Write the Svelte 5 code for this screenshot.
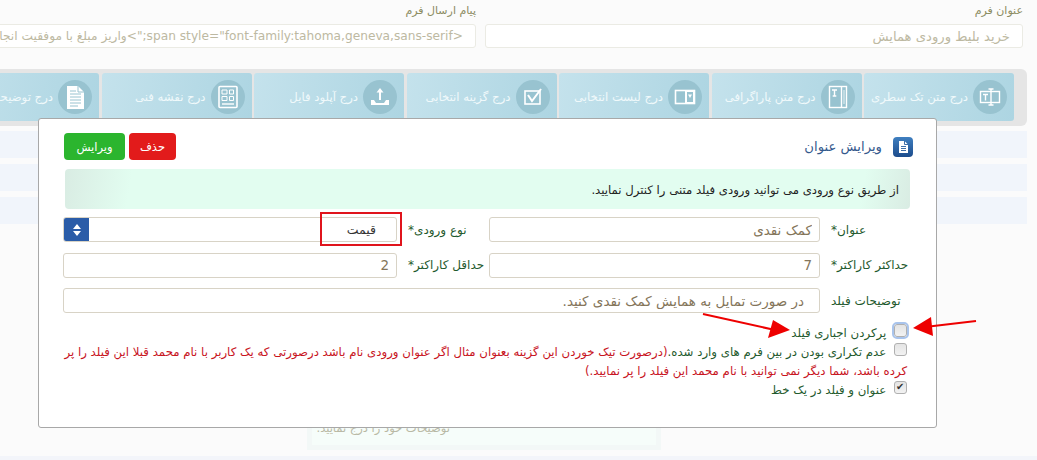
<script>
  const sendMessage = '<span style="font-family:tahoma,geneva,sans-serif;">واریز مبلغ با موفقیت انجام شد';

  const tabs = [
    { id: "line", label: "درج متن تک سطری" },
    { id: "para", label: "درج متن پاراگرافی" },
    { id: "list", label: "درج لیست انتخابی" },
    { id: "check", label: "درج گزینه انتخابی" },
    { id: "upload", label: "درج آپلود فایل" },
    { id: "plan", label: "درج نقشه فنی" },
    { id: "doc", label: "درج توضیحات" },
  ];
</script>

<div class="page" dir="rtl">
  <div class="top-fields">
    <div class="field">
      <span class="top-label">عنوان فرم</span>
      <input class="top-input title-input" value="خرید بلیط ورودی همایش" />
    </div>
    <div class="field">
      <span class="top-label">پیام ارسال فرم</span>
      <input class="top-input" value={sendMessage} />
    </div>
  </div>

  <div class="toolbar">
    {#each tabs as tab}
      <div class="tab">
        <span class="tab-icon">
          <svg viewBox="0 0 34 34" width="34" height="34" fill="none" stroke="#fff" stroke-width="1.4">
            {#if tab.id === "line"}
              <rect x="7.5" y="11.5" width="19" height="11" />
              <path d="M18 9v16M15.5 9h5M15.5 25h5" />
              <path d="M10 14.5h5M12.5 14.5v6" />
            {:else if tab.id === "para"}
              <rect x="8.5" y="6.5" width="17" height="21" />
              <path d="M20.5 6v22" />
              <path d="M11 10h5M13.5 10v6M11.7 16h3.6" />
              <path d="M23 10v14" stroke-width="0.8" />
            {:else if tab.id === "list"}
              <rect x="7.5" y="10.5" width="19" height="13" stroke-width="1.6" />
              <rect x="17" y="10" width="10" height="14" fill="#fff" stroke="none" />
              <rect x="19" y="12" width="6" height="10" fill="#98c3d0" stroke="none" />
              <path d="M20 14.5h4l-2 3.5z" fill="#fff" stroke="none" />
            {:else if tab.id === "check"}
              <rect x="9" y="11" width="15" height="13" stroke-width="1.6" />
              <path d="M12 15l4 6 9-12" stroke-width="2" />
            {:else if tab.id === "upload"}
              <path d="M17 20V10" stroke-width="2" />
              <path d="M13.5 12.5L17 8l3.5 4.5z" fill="#fff" stroke="none" />
              <path d="M8 20h3l2 3h8l2-3h3v5H8z" fill="#fff" stroke="none" />
            {:else if tab.id === "plan"}
              <rect x="8" y="6.5" width="18" height="21" rx="1" stroke-width="1.6" />
              <path d="M11 10h5v4h-5zM18.5 10h4v4h-4zM11 16.5h5v4h-5zM18.5 16.5h4v4h-4z" stroke-width="1" />
              <path d="M11 24h12" stroke-width="1.4" />
            {:else}
              <path d="M9 6h11l6 6v17H9z" fill="#fff" stroke="none" />
              <path d="M20 6v6h6" stroke="#98c3d0" stroke-width="1" />
              <path d="M12 11h6M12 14h11M12 17h11M12 20h11M12 23h11M12 26h8" stroke="#98c3d0" stroke-width="1" />
            {/if}
          </svg>
        </span>
        <span class="tab-text">{tab.label}</span>
      </div>
    {/each}
  </div>

  <div class="ghost-row"></div>
  <div class="ghost-row"></div>
  <div class="ghost-row"></div>

  <div class="ghost-card">
    <div class="ghost-card-inner">توضیحات خود را درج نمایید.</div>
  </div>
  <div class="ghost-band"></div>

  <div class="modal">
    <div class="modal-head">
      <div class="modal-title">
        <span class="title-icon">
          <svg viewBox="0 0 20 20" width="20" height="20">
            <path d="M6 4h5.5L15 7.5V16H6z" fill="#fff" />
            <path d="M11.5 4v3.5H15M8 9.5h5M8 11.500h5M8 13.500h5" fill="none" stroke="#2a5f9e" stroke-width="0.9" />
          </svg>
        </span>
        <span>ویرایش عنوان</span>
      </div>
      <div class="modal-actions">
        <button class="btn btn-red">حذف</button>
        <button class="btn btn-green">ویرایش</button>
      </div>
    </div>

    <div class="alert">از طریق نوع ورودی می توانید ورودی فیلد متنی را کنترل نمایید.</div>

    <div class="form-grid">
      <span class="form-label">عنوان*</span>
      <input class="form-input" value="کمک نقدی" />
      <span class="form-label">نوع ورودی*</span>
      <div class="form-select">
        <span class="select-value">قیمت</span>
        <span class="select-arrows">
          <svg viewBox="0 0 10 14" width="10" height="14" fill="#fff">
            <path d="M5 1l4 5H1zM5 13L1 8h8z" />
          </svg>
        </span>
      </div>

      <span class="form-label">حداکثر کاراکتر*</span>
      <input class="form-input" value="7" />
      <span class="form-label">حداقل کاراکتر*</span>
      <input class="form-input" value="2" />

      <span class="form-label">توضیحات فیلد</span>
      <input class="form-input wide" value="در صورت تمایل به همایش کمک نقدی کنید." />
    </div>

    <div class="options">
      <label class="option">
        <input type="checkbox" class="focused" />
        <span class="green">پرکردن اجباری فیلد</span>
      </label>
      <label class="option">
        <input type="checkbox" />
        <span class="green">عدم تکراری بودن در بین فرم های وارد شده.</span><span class="red">(درصورت تیک خوردن این گزینه بعنوان مثال اگر عنوان ورودی نام باشد درصورتی که یک کاربر با نام محمد قبلا این فیلد را پر کرده باشد، شما دیگر نمی توانید با نام محمد این فیلد را پر نمایید.)</span>
      </label>
      <label class="option">
        <input type="checkbox" checked />
        <span class="green">عنوان و فیلد در یک خط</span>
      </label>
    </div>
  </div>

  <div class="callout-box"></div>

  <svg class="callout-arrows" viewBox="0 0 300 40" width="300" height="40">
    <path d="M13 9L85 25" stroke="#ee0000" stroke-width="2" />
    <path d="M100 25L83 15L78 33z" fill="#ee0000" />
    <path d="M286 16L235 22" stroke="#ee0000" stroke-width="2" />
    <path d="M223 23L241 12L243 31z" fill="#ee0000" />
  </svg>
</div>

<style>
  :global(body) {
    margin: 0;
    overflow: hidden;
    background: #fbfbfb;
  }

  .page {
    position: relative;
    width: 1037px;
    height: 460px;
    overflow: hidden;
    padding-top: 2px;
    box-sizing: border-box;
    font-family: "DejaVu Sans", sans-serif;
  }

  .top-fields {
    display: flex;
    gap: 9px;
    padding-right: 14px;
  }

  .field {
    display: flex;
    flex: 0 0 538px;
    flex-direction: column;
    gap: 4px;
  }

  .top-label {
    font-size: 11px;
    line-height: 18px;
    color: #8c8c62;
  }

  .top-input {
    box-sizing: border-box;
    width: 538px;
    height: 24px;
    padding: 0 12px;
    border: 1px solid #ebebe4;
    border-radius: 3px;
    background: #fff;
    color: #bdb9a2;
    font: 12.2px "DejaVu Sans", sans-serif;
  }

  .title-input {
    font-size: 13.2px;
  }

  .toolbar {
    display: flex;
    gap: 2.5px;
    width: 1027px;
    height: 57px;
    box-sizing: border-box;
    margin: 21px 10px 0 0;
    padding: 4px 13px 0 0;
    border-radius: 0 6px 6px 0;
    background: #e5e5e5;
  }

  .tab {
    display: flex;
    flex: 0 0 150px;
    align-items: center;
    gap: 5px;
    box-sizing: border-box;
    min-width: 0;
    height: 48px;
    padding: 0 7px 0 0;
    border-radius: 3px;
    background: linear-gradient(100deg, #c4e2ec 0%, #add5e2 100%);
    white-space: nowrap;
  }

  .tab-icon {
    display: flex;
    flex: 0 0 34px;
    height: 34px;
    border-radius: 50%;
    background: #98c3d0;
  }

  .tab-text {
    font-size: 11.7px;
    color: #f0f9fb;
  }

  .ghost-row {
    width: 1027px;
    height: 27px;
    margin: 0 10px 6px 0;
    background: #f1f5fb;
  }

  .toolbar + .ghost-row {
    margin-top: 5px;
  }

  .ghost-card {
    box-sizing: border-box;
    width: 354px;
    height: 220px;
    margin: 0 376px 0 0;
    padding: 0 5px 5px;
    display: flex;
    align-items: flex-end;
    background: #f3f8f7;
  }

  .ghost-card-inner {
    box-sizing: border-box;
    width: 100%;
    height: 25px;
    padding: 1px 206px 0 0;
    background: #f6fdfa;
    color: #b9b9a5;
    font-size: 11.5px;
    white-space: nowrap;
  }

  .ghost-band {
    height: 9px;
    margin-top: 6px;
    background: #f3f5fa;
  }

  .modal {
    position: absolute;
    top: 118px;
    left: 38px;
    box-sizing: border-box;
    width: 899px;
    height: 310px;
    padding: 14px 26px 0 24px;
    border: 1px solid #a8a8a8;
    border-radius: 3px;
    background: #fff;
  }

  .modal-head {
    display: flex;
    align-items: center;
    justify-content: space-between;
    height: 27px;
  }

  .modal-title {
    display: flex;
    align-items: center;
    gap: 11px;
    margin-right: -3px;
    color: #34588c;
    font-size: 13.2px;
  }

  .title-icon {
    display: flex;
    border-radius: 4px;
    background: linear-gradient(#3f7fc0, #1c4c8c);
  }

  .modal-actions {
    display: flex;
    gap: 4px;
    padding-left: 1px;
  }

  .btn {
    height: 27px;
    padding: 0;
    border: 0;
    border-radius: 4px;
    color: #fff;
    font: 11.5px "DejaVu Sans", sans-serif;
  }

  .btn-red {
    width: 47px;
    background: #e21b1b;
  }

  .btn-green {
    width: 61px;
    background: #2bb52e;
  }

  .alert {
    box-sizing: border-box;
    height: 40px;
    margin: 9px 0 8px 2px;
    padding: 0 11px;
    border-radius: 4px;
    background: linear-gradient(100deg, #d9ece3 0%, #e2fdf0 8%, #e2fdf0 94%, #d9ece3 100%);
    color: #222;
    font-size: 11.7px;
    line-height: 42px;
  }

  .form-grid {
    display: grid;
    grid-template-columns: 90px 331px 92px 334px;
    grid-auto-rows: 25px;
    row-gap: 10.5px;
    align-items: center;
  }

  .form-label {
    padding-left: 11px;
    text-align: left;
    white-space: nowrap;
    color: #1f5a2e;
    font-size: 12px;
  }

  .form-input {
    box-sizing: border-box;
    width: 100%;
    height: 25px;
    padding: 0 7px;
    border: 1px solid #d8d3c6;
    border-radius: 3px;
    background: #fff;
    color: #84755a;
    font: 13.5px "DejaVu Sans", sans-serif;
  }

  .form-input.wide {
    grid-column: 2 / 5;
    padding-right: 15px;
  }

  .form-select {
    display: flex;
    align-items: center;
    justify-content: space-between;
    box-sizing: border-box;
    height: 25px;
    padding-right: 20px;
    border: 1px solid #d8d3c6;
    border-radius: 3px;
    color: #333;
    font-size: 12.5px;
    overflow: hidden;
  }

  .select-arrows {
    display: flex;
    align-items: center;
    justify-content: center;
    width: 25px;
    height: 100%;
    background: #2a5ca8;
  }

  .options {
    margin-top: 11px;
    padding-right: 3px;
  }

  .option {
    display: block;
    font-size: 11.75px;
    line-height: 19px;
  }

  .option input {
    appearance: none;
    position: relative;
    box-sizing: border-box;
    width: 13px;
    height: 13px;
    margin: -3px 0 0 4px;
    border: 1px solid #b0b0b0;
    border-radius: 3px;
    background: linear-gradient(#e4e4e4, #f2f2f2);
    vertical-align: 0;
  }

  .option input.focused {
    outline: 2px solid #a9c4ec;
    outline-offset: 0;
  }

  .option input:checked::after {
    content: "✔";
    position: absolute;
    top: -1px;
    left: 1px;
    color: #333;
    font-size: 10px;
    line-height: 11px;
  }

  .green {
    color: #1f5a2e;
  }

  .red {
    color: #c8141e;
  }

  .callout-box {
    position: absolute;
    top: 212px;
    left: 320px;
    width: 78px;
    height: 30px;
    border: 2px solid #e0141c;
  }

  .callout-arrows {
    position: absolute;
    top: 305px;
    left: 690px;
  }
</style>
